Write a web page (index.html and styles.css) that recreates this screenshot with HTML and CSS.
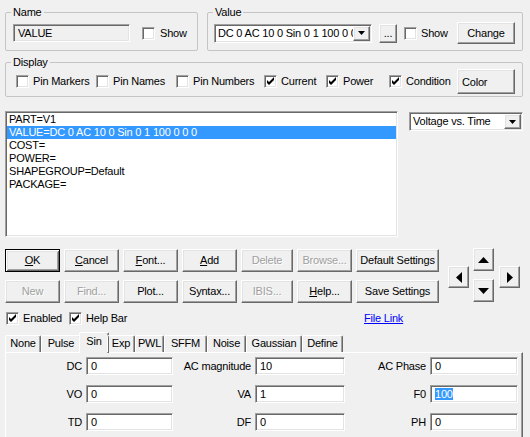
FILE: index.html
```html
<!DOCTYPE html>
<html>
<head>
<meta charset="utf-8">
<link rel="stylesheet" href="styles.css">
</head>
<body>
<div class="top-row">
  <fieldset class="group group-name">
    <legend>Name</legend>
    <div class="group-body name-body">
      <div class="edit sunken name-edit">VALUE</div>
      <label class="check name-show"><span class="box sunken"></span>Show</label>
    </div>
  </fieldset>
  <fieldset class="group group-value">
    <legend>Value</legend>
    <div class="group-body value-body">
      <div class="combo sunken value-combo">
        <span class="combo-text">DC 0 AC 10 0 Sin 0 1 100 0 0 0</span>
        <span class="combo-btn raised"><svg width="7" height="4" viewBox="0 0 7 4"><path d="M0 0h7L3.5 4z"/></svg></span>
      </div>
      <button class="btn raised btn-dots">...</button>
      <label class="check value-show"><span class="box sunken"></span>Show</label>
      <button class="btn raised btn-change">Change</button>
    </div>
  </fieldset>
</div>

<fieldset class="group group-display">
  <legend>Display</legend>
  <div class="group-body display-body">
    <label class="check"><span class="box sunken"></span>Pin Markers</label>
    <label class="check"><span class="box sunken"></span>Pin Names</label>
    <label class="check"><span class="box sunken"></span>Pin Numbers</label>
    <label class="check"><span class="box sunken checked"><svg width="9" height="9" viewBox="0 0 9 9"><path d="M1 3L3 5L8 0V3L3 8L1 6z"/></svg></span>Current</label>
    <label class="check"><span class="box sunken checked"><svg width="9" height="9" viewBox="0 0 9 9"><path d="M1 3L3 5L8 0V3L3 8L1 6z"/></svg></span>Power</label>
    <label class="check"><span class="box sunken checked"><svg width="9" height="9" viewBox="0 0 9 9"><path d="M1 3L3 5L8 0V3L3 8L1 6z"/></svg></span>Condition</label>
    <button class="btn raised btn-color">Color</button>
  </div>
</fieldset>

<div class="list-row">
  <div class="listbox sunken">
    <div class="list-item">PART=V1</div>
    <div class="list-item selected">VALUE=DC 0 AC 10 0 Sin 0 1 100 0 0 0</div>
    <div class="list-item">COST=</div>
    <div class="list-item">POWER=</div>
    <div class="list-item">SHAPEGROUP=Default</div>
    <div class="list-item">PACKAGE=</div>
  </div>
  <div class="combo sunken plot-combo">
    <span class="combo-text">Voltage vs. Time</span>
    <span class="combo-btn raised"><svg width="7" height="4" viewBox="0 0 7 4"><path d="M0 0h7L3.5 4z"/></svg></span>
  </div>
</div>

<div class="buttons-row">
  <div class="btn-grid">
    <button class="btn raised default"><u>O</u>K</button>
    <button class="btn raised"><u>C</u>ancel</button>
    <button class="btn raised"><u>F</u>ont...</button>
    <button class="btn raised"><u>A</u>dd</button>
    <button class="btn raised disabled">Delete</button>
    <button class="btn raised disabled">Browse...</button>
    <button class="btn raised">Default Settings</button>
    <button class="btn raised disabled">New</button>
    <button class="btn raised disabled">Find...</button>
    <button class="btn raised">Plot...</button>
    <button class="btn raised">Syntax...</button>
    <button class="btn raised disabled">IBIS...</button>
    <button class="btn raised"><u>H</u>elp...</button>
    <button class="btn raised">Save Settings</button>
  </div>
  <div class="dpad">
    <button class="btn raised arrow-btn dpad-side"><svg width="6" height="11" viewBox="0 0 6 11"><path d="M6 0V11L0 5.5z"/></svg></button>
    <div class="dpad-mid">
      <button class="btn raised arrow-btn"><svg width="11" height="6" viewBox="0 0 11 6"><path d="M0 6L5.5 0L11 6z"/></svg></button>
      <button class="btn raised arrow-btn"><svg width="11" height="6" viewBox="0 0 11 6"><path d="M0 0H11L5.5 6z"/></svg></button>
    </div>
    <button class="btn raised arrow-btn dpad-side"><svg width="6" height="11" viewBox="0 0 6 11"><path d="M0 0V11L6 5.5z"/></svg></button>
  </div>
</div>

<div class="options-row">
  <label class="check"><span class="box sunken checked"><svg width="9" height="9" viewBox="0 0 9 9"><path d="M1 3L3 5L8 0V3L3 8L1 6z"/></svg></span>Enabled</label>
  <label class="check"><span class="box sunken checked"><svg width="9" height="9" viewBox="0 0 9 9"><path d="M1 3L3 5L8 0V3L3 8L1 6z"/></svg></span>Help Bar</label>
  <a class="file-link" href="#">File Link</a>
</div>

<div class="tabs">
  <div class="tab">None</div>
  <div class="tab">Pulse</div>
  <div class="tab active">Sin</div>
  <div class="tab">Exp</div>
  <div class="tab">PWL</div>
  <div class="tab">SFFM</div>
  <div class="tab">Noise</div>
  <div class="tab">Gaussian</div>
  <div class="tab">Define</div>
</div>
<div class="tab-panel">
  <div class="fields">
    <span class="field-label">DC</span><div class="edit sunken field">0</div>
    <span class="field-label">AC magnitude</span><div class="edit sunken field">10</div>
    <span class="field-label">AC Phase</span><div class="edit sunken field">0</div>
    <span class="field-label">VO</span><div class="edit sunken field">0</div>
    <span class="field-label">VA</span><div class="edit sunken field">1</div>
    <span class="field-label">F0</span><div class="edit sunken field"><span class="sel">100</span></div>
    <span class="field-label">TD</span><div class="edit sunken field">0</div>
    <span class="field-label">DF</span><div class="edit sunken field">0</div>
    <span class="field-label">PH</span><div class="edit sunken field">0</div>
  </div>
</div>
</body>
</html>
```

FILE: styles.css
```css
* { box-sizing: border-box; }
html, body { margin: 0; overflow: hidden; }
body {
  width: 530px;
  height: 437px;
  padding-top: 6px;
  background: #f0f0f0;
  color: #000;
  font-family: "Liberation Sans", Arial, sans-serif;
  font-size: 11px;
  letter-spacing: -0.2px;
  line-height: 13px;
}

/* 3D borders */
.raised {
  background: #f0f0f0;
  border: 1px solid;
  border-color: #fff #696969 #696969 #fff;
  box-shadow: inset -1px -1px #a0a0a0, inset 1px 1px #e3e3e3;
}
.sunken {
  border: 1px solid;
  border-color: #a0a0a0 #fff #fff #a0a0a0;
  box-shadow: inset 1px 1px #696969, inset -1px -1px #e3e3e3;
}

/* group boxes */
.group {
  margin: 0;
  padding: 0;
  min-width: 0;
  border: 1px solid #c4c4c4;
  border-radius: 2px;
}
.group legend {
  margin-left: 5px;
  padding: 0 2px;
  line-height: 13px;
}
.top-row {
  display: flex;
  gap: 9px;
  padding-left: 5px;
}
.group-name { width: 193px; }
.group-value { width: 316px; }
.group-body {
  display: flex;
  align-items: center;
}
.name-body { padding: 3px 0 6px 7px; height: 31px; }
.value-body { padding: 3px 7px 6px 6px; height: 31px; }

.edit {
  background: #fff;
  padding-left: 4px;
  line-height: 16px;
  white-space: nowrap;
  overflow: hidden;
}
.name-edit {
  width: 117px;
  height: 18px;
  background: #f0f0f0;
}
.name-show { margin-left: 12px; }

.check {
  display: flex;
  align-items: center;
  gap: 5px;
  white-space: nowrap;
}
.box {
  width: 13px;
  height: 13px;
  background: #fff;
  display: flex;
  align-items: center;
  justify-content: center;
  flex: none;
}
.box svg { fill: #000; }

.combo {
  display: flex;
  background: #fff;
}
.combo-text {
  flex: 1;
  min-width: 0;
  overflow: hidden;
  white-space: nowrap;
  padding-left: 3px;
  line-height: 17px;
}
.combo-btn {
  width: 17px;
  margin: 1px 1px 1px 0;
  display: flex;
  align-items: center;
  justify-content: center;
  flex: none;
}
.value-combo { width: 158px; height: 19px; }

.btn {
  font: inherit;
  letter-spacing: inherit;
  color: #000;
  padding: 0;
  margin: 0;
  white-space: nowrap;
}
.btn-dots { width: 18px; height: 19px; margin-left: 7px; line-height: 12px; }
.value-show { margin-left: 7px; gap: 4px; }
.btn-change { width: 58px; height: 22px; margin-left: auto; }

.group-display {
  width: 518px;
  margin: 5px 0 0 5px;
}
.display-body {
  display: grid;
  grid-template-columns: 80px 80px 88px 62px 63px 68px 58px;
  align-items: center;
  padding: 0 0 2px 10px;
}
.display-body .check { gap: 4px; }
.btn-color {
  height: 25px;
  text-align: left;
  padding-left: 4px;
  padding-top: 2px;
}

/* list */
.list-row {
  display: flex;
  align-items: flex-start;
  gap: 11px;
  margin-top: 14px;
  padding-left: 5px;
}
.listbox {
  width: 393px;
  height: 126px;
  background: #fff;
  padding: 1px;
}
.list-item {
  padding-left: 2px;
  line-height: 13px;
  white-space: nowrap;
}
.list-item.selected {
  background: #3399ff;
  color: #fff;
}
.plot-combo {
  width: 114px;
  height: 19px;
  margin-top: 1px;
}

/* buttons */
.buttons-row {
  display: flex;
  align-items: flex-start;
  margin-top: 12px;
  padding-left: 5px;
}
.btn-grid {
  display: grid;
  grid-template-columns: 55px 55px 55px 55px 52px 55px 83px;
  grid-auto-rows: 23px;
  column-gap: 4px;
  row-gap: 8px;
}
.btn.default {
  border: 1px solid #000;
  box-shadow: inset 1px 1px #fff, inset -1px -1px #696969, inset 2px 2px #e3e3e3, inset -2px -2px #a0a0a0;
}
.btn.disabled {
  color: #a0a0a0;
  text-shadow: 1px 1px #fff;
}
.btn u { text-decoration: underline; }

.dpad {
  display: flex;
  align-items: flex-start;
  margin-left: 9px;
  margin-top: -1px;
}
.arrow-btn {
  width: 21px;
  height: 23px;
  display: flex;
  align-items: center;
  justify-content: center;
}
.arrow-btn svg { fill: #000; }
.dpad-side { margin-top: 18px; height: 22px; }
.dpad-mid {
  display: flex;
  flex-direction: column;
  gap: 8px;
  margin: 0 5px 0 4px;
}

/* options */
.options-row {
  display: grid;
  grid-template-columns: 63px 295px auto;
  align-items: center;
  margin-top: 9px;
  padding-left: 6px;
  height: 13px;
}
.options-row .check { gap: 4px; }
.file-link {
  color: #0000ff;
  text-decoration: underline;
}

/* tabs */
.tabs {
  display: grid;
  grid-template-columns: 36px 40px 26px 28px 29px 43px 39px 56px 41px;
  align-items: end;
  height: 20px;
  margin-top: 7px;
  padding-left: 5px;
  position: relative;
  z-index: 1;
}
.tab {
  height: 17px;
  line-height: 15px;
  text-align: center;
  border-top: 1px solid #fff;
  border-left: 1px solid #fff;
  border-right: 1px solid #696969;
  box-shadow: inset -1px 0 #a0a0a0;
  border-radius: 2px 2px 0 0;
  white-space: nowrap;
}
.tab.active {
  height: 21px;
  margin: 0 -2px -1px -2px;
  line-height: 17px;
  background: #f0f0f0;
}
.tab-panel {
  width: 518px;
  height: 100px;
  margin-left: 5px;
  padding-top: 4px;
  border: 1px solid;
  border-color: #fff #696969 #696969 #fff;
  box-shadow: inset -1px -1px #a0a0a0;
}
.fields {
  display: grid;
  grid-template-columns: 76px 87px 74px 90px 77px 88px;
  grid-auto-rows: 18px;
  column-gap: 4px;
  row-gap: 10px;
}
.field-label {
  text-align: right;
  line-height: 18px;
  white-space: nowrap;
}
.field { height: 18px; }
.sel {
  background: #3399ff;
  color: #fff;
}
```
